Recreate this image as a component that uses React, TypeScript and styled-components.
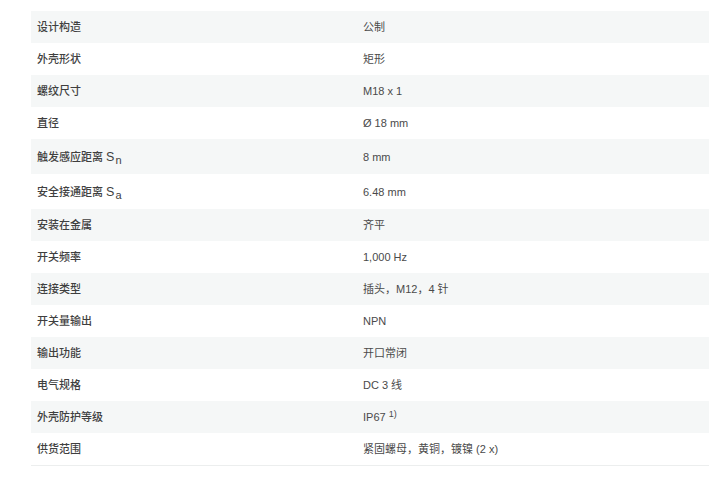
import React from "react";
import styled, { createGlobalStyle } from "styled-components";

const Global = createGlobalStyle`
  html, body { margin: 0; padding: 0; background: #fff; }
  body { font-family: "Liberation Sans", "Noto Sans CJK SC", sans-serif; }
`;

const Page = styled.div`
  padding: 11px 0 0 31px;
`;

const Table = styled.table`
  width: 100%;
  border-collapse: collapse;
  font-size: 11px;
  line-height: 16px;
  border-bottom: 1px solid #eceeee;
`;

const Row = styled.tr<{ $shade: boolean; $tall: boolean }>`
  background: ${(p) => (p.$shade ? "#f5f7f7" : "#fff")};
  height: ${(p) => (p.$tall ? "35px" : "32px")};
`;

const Label = styled.td`
  width: 314px;
  padding: 0 6px;
  color: #3f3f3f;
  font-weight: 500;
  vertical-align: middle;
`;

const Value = styled.td`
  padding: 0 6px;
  color: #4a4a4a;
  vertical-align: middle;
`;

const Sub = styled.sub`
  font-size: 11px;
  line-height: 0;
  vertical-align: -3px;
  margin-left: 1px;
`;

const Sup = styled.sup`
  font-size: 9px;
  line-height: 0;
  margin-left: 3px;
  vertical-align: 4px;
`;

const SLetter = styled.span`
  font-size: 12.5px;
  font-weight: 400;
`;

type Item = { label: React.ReactNode; value: React.ReactNode; tall?: boolean };

const rows: Item[] = [
  { label: "设计构造", value: "公制" },
  { label: "外壳形状", value: "矩形" },
  { label: "螺纹尺寸", value: "M18 x 1" },
  { label: "直径", value: "Ø 18 mm" },
  { label: <>触发感应距离 <SLetter>S</SLetter><Sub>n</Sub></>, value: "8 mm", tall: true },
  { label: <>安全接通距离 <SLetter>S</SLetter><Sub>a</Sub></>, value: "6.48 mm", tall: true },
  { label: "安装在金属", value: "齐平" },
  { label: "开关频率", value: "1,000 Hz" },
  { label: "连接类型", value: "插头，M12，4 针" },
  { label: "开关量输出", value: "NPN" },
  { label: "输出功能", value: "开口常闭" },
  { label: "电气规格", value: "DC 3 线" },
  { label: "外壳防护等级", value: <>IP67<Sup>1)</Sup></> },
  { label: "供货范围", value: "紧固螺母，黄铜，镀镍 (2 x)" },
];

export default function App() {
  return (
    <>
      <Global />
      <Page>
        <Table>
          <tbody>
            {rows.map((r, i) => (
              <Row key={i} $shade={i % 2 === 0} $tall={!!r.tall}>
                <Label>{r.label}</Label>
                <Value>{r.value}</Value>
              </Row>
            ))}
          </tbody>
        </Table>
      </Page>
    </>
  );
}
